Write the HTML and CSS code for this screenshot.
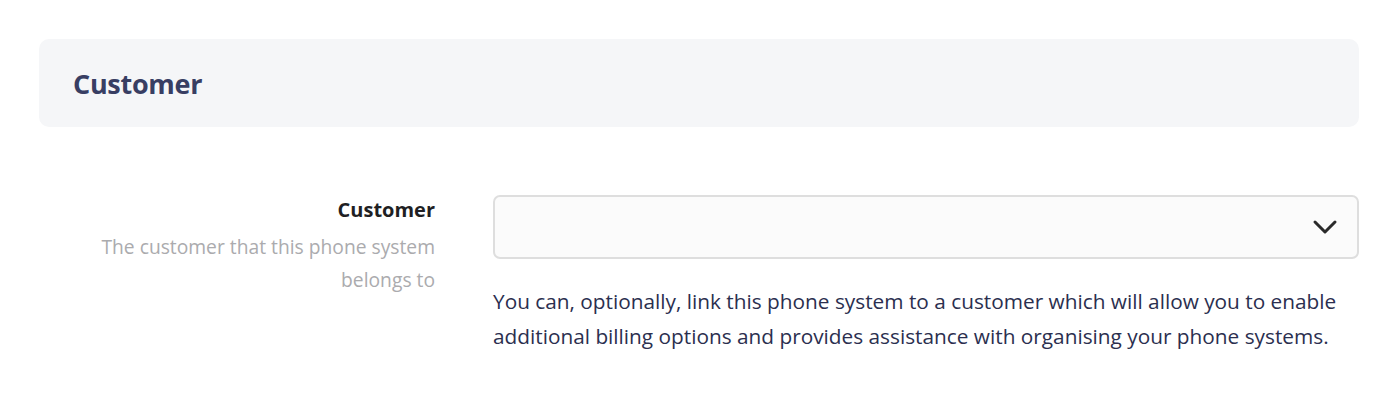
FILE: index.html
```html
<!DOCTYPE html>
<html lang="en">
<head>
  <meta charset="UTF-8" />
  <meta name="viewport" content="width=device-width, initial-scale=1.0" />
  <title>Customer</title>
  <link rel="stylesheet" href="styles.css">
</head>
<body>
  <div class="page">
    <div class="section-header">
      <h2>Customer</h2>
    </div>

    <div class="field-row">
      <div class="field-label">
        <label for="customer">Customer</label>
        <p class="field-desc">The customer that this phone system belongs to</p>
      </div>
      <div class="field-input">
        <div class="select">
          <select id="customer">
            <option value=""></option>
          </select>
          <svg class="chevron" width="26" height="16" viewBox="0 0 26 16">
            <path d="M3 3 L13 13 L23 3" fill="none" stroke="#2a2a2a" stroke-width="3" stroke-linecap="round" stroke-linejoin="round"/>
          </svg>
        </div>
        <p class="field-help">You can, optionally, link this phone system to a customer which will allow you to enable additional billing options and provides assistance with organising your phone systems.</p>
      </div>
    </div>
  </div>
</body>
</html>
```

FILE: styles.css
```css
* { box-sizing: border-box; }
html, body {
  margin: 0;
  padding: 0;
  background: #fff;
  font-family: "Open Sans", "Noto Sans", sans-serif;
}
.page {
  padding: 39px 41px 0 39px;
}
.section-header {
  background: #f5f6f8;
  border-radius: 10px;
  height: 88px;
  display: flex;
  align-items: center;
  padding: 0 34px;
}
.section-header h2 {
  margin: 0;
  font-size: 27px;
  font-weight: 700;
  color: #383e63;
  letter-spacing: -0.3px;
}
.field-row {
  display: flex;
  gap: 58px;
  margin-top: 68px;
}
.field-label {
  width: 396px;
  text-align: right;
  padding-top: 2px;
}
.field-label label {
  display: block;
  font-size: 20px;
  font-weight: 700;
  color: #1f1f23;
  line-height: 26px;
}
.field-desc {
  margin: 7px 0 0 0;
  font-size: 19.25px;
  line-height: 33px;
  color: #ababae;
  padding-left: 40px;
}
.field-input {
  flex: 1;
}
.select {
  position: relative;
}
.select select {
  appearance: none;
  -webkit-appearance: none;
  width: 100%;
  height: 64px;
  border: 2px solid #dedede;
  border-radius: 7px;
  background: #fbfbfb;
  font: inherit;
  font-size: 19px;
  padding: 0 60px 0 16px;
}
.chevron {
  position: absolute;
  right: 21px;
  top: 24px;
  pointer-events: none;
}
.field-help {
  margin: 25px 0 0 0;
  font-size: 20.8px;
  line-height: 35px;
  color: #2b2f4f;
}
```
